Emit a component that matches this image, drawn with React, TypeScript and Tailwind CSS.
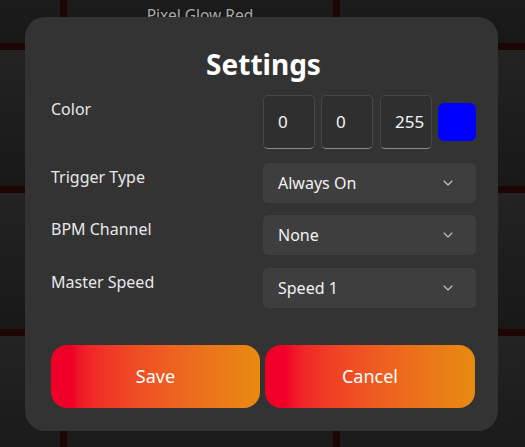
import { ChevronDown } from "lucide-react";

const font = { fontFamily: '"Noto Sans", "Open Sans", sans-serif' };

const Tile = ({ label }: { label?: string }) => (
  <div className="flex flex-col justify-end items-center pb-[16px] bg-gradient-to-b from-[#232323] to-[#181818]">
    {label && <span className="text-[15.5px] text-[#a9a9a9]">{label}</span>}
  </div>
);

const Select = ({ value }: { value: string }) => (
  <div className="flex items-center justify-between h-[40px] w-full rounded-[5px] bg-[#3e3e3e] pl-[15px] pr-[20px] text-[16px] text-[#f2f2f2]">
    <span>{value}</span>
    <ChevronDown size={16} strokeWidth={1.6} className="text-[#c4c4c4]" />
  </div>
);

const Row = ({ label, children, className }: { label: string; children: React.ReactNode; className?: string }) => (
  <div className={"flex justify-between " + (className ?? "")}>
    <div className="pt-[2px] text-[16px] leading-[24px] text-[#e8e8e8]">{label}</div>
    <div className="w-[213px]">{children}</div>
  </div>
);

const NumBox = ({ v }: { v: string }) => (
  <div className="flex items-center h-[54px] w-[52px] rounded-[5px] border border-[#474747] border-b-[#8c8c8c] bg-[#2f2f2f] pl-[14px] text-[17px] text-[#f4f4f4]">
    {v}
  </div>
);

export default function App() {
  return (
    <div className="relative w-[525px] h-[447px] overflow-hidden bg-[#1c0503]" style={font}>
      <div className="grid grid-cols-[repeat(3,266px)] grid-rows-[repeat(4,136px)] gap-[7px] -ml-[206px] -mt-[93px]">
        <Tile />
        <Tile label="Pixel Glow Red" />
        <Tile />
        <Tile />
        <Tile />
        <Tile />
        <Tile />
        <Tile />
        <Tile />
        <Tile />
        <Tile />
        <Tile />
      </div>

      <div className="absolute left-[25px] top-[17px] w-[473px] h-[414px] rounded-[20px] bg-[#333333] pl-[26px] pr-[22px] pt-[31px]">
        <h1 className="text-center text-[28px] leading-[32px] font-bold text-white">Settings</h1>

        <Row label="Color" className="mt-[15px]">
          <div className="flex items-center">
            <NumBox v="0" />
            <div className="ml-[6px]"><NumBox v="0" /></div>
            <div className="ml-[7px]"><NumBox v="255" /></div>
            <div className="ml-[6px] h-[38px] w-[38px] rounded-[6px] bg-[#0000ff]" />
          </div>
        </Row>

        <Row label="Trigger Type" className="mt-[14px]">
          <Select value="Always On" />
        </Row>
        <Row label="BPM Channel" className="mt-[12px]">
          <Select value="None" />
        </Row>
        <Row label="Master Speed" className="mt-[13px]">
          <Select value="Speed 1" />
        </Row>

        <div className="mt-[37px] flex gap-[5px]">
          <button className="h-[63px] w-[209px] rounded-[16px] bg-gradient-to-r from-[#f00028] from-10% to-[#e88b10] text-[18px] text-white">
            Save
          </button>
          <button className="h-[63px] w-[210px] rounded-[16px] bg-gradient-to-r from-[#f00028] from-10% to-[#e88b10] text-[18px] text-white">
            Cancel
          </button>
        </div>
      </div>
    </div>
  );
}
